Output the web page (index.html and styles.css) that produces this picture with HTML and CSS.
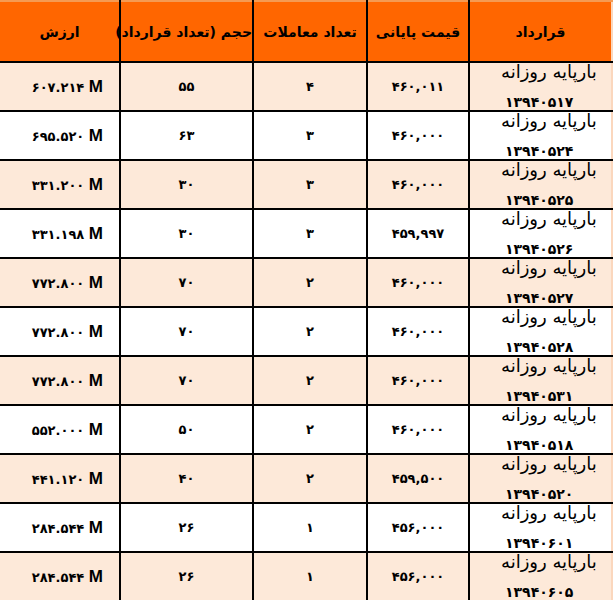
FILE: index.html
```html
<!DOCTYPE html>
<html lang="fa" dir="rtl">
<head>
<meta charset="utf-8">
<title>قراردادها</title>
<link rel="stylesheet" href="styles.css">
</head>
<body>
<table class="grid">
  <colgroup>
    <col class="c1"><col class="c2"><col class="c3"><col class="c4"><col class="c5">
  </colgroup>
  <thead>
    <tr>
      <th>قرارداد</th>
      <th>قیمت پایانی</th>
      <th>تعداد معاملات</th>
      <th>حجم (تعداد قرارداد)</th>
      <th>ارزش</th>
    </tr>
  </thead>
  <tbody>
    <tr class="odd"><td class="name"><div class="l1">بارپایه روزانه</div><div class="l2">۱۳۹۴۰۵۱۷</div></td><td class="num">۴۶۰,۰۱۱</td><td>۴</td><td>۵۵</td><td class="val">۶۰۷.۲۱۴ <b>M</b></td></tr>
    <tr><td class="name"><div class="l1">بارپایه روزانه</div><div class="l2">۱۳۹۴۰۵۲۴</div></td><td class="num">۴۶۰,۰۰۰</td><td>۳</td><td>۶۳</td><td class="val">۶۹۵.۵۲۰ <b>M</b></td></tr>
    <tr class="odd"><td class="name"><div class="l1">بارپایه روزانه</div><div class="l2">۱۳۹۴۰۵۲۵</div></td><td class="num">۴۶۰,۰۰۰</td><td>۳</td><td>۳۰</td><td class="val">۳۳۱.۲۰۰ <b>M</b></td></tr>
    <tr><td class="name"><div class="l1">بارپایه روزانه</div><div class="l2">۱۳۹۴۰۵۲۶</div></td><td class="num">۴۵۹,۹۹۷</td><td>۳</td><td>۳۰</td><td class="val">۳۳۱.۱۹۸ <b>M</b></td></tr>
    <tr class="odd"><td class="name"><div class="l1">بارپایه روزانه</div><div class="l2">۱۳۹۴۰۵۲۷</div></td><td class="num">۴۶۰,۰۰۰</td><td>۲</td><td>۷۰</td><td class="val">۷۷۲.۸۰۰ <b>M</b></td></tr>
    <tr><td class="name"><div class="l1">بارپایه روزانه</div><div class="l2">۱۳۹۴۰۵۲۸</div></td><td class="num">۴۶۰,۰۰۰</td><td>۲</td><td>۷۰</td><td class="val">۷۷۲.۸۰۰ <b>M</b></td></tr>
    <tr class="odd"><td class="name"><div class="l1">بارپایه روزانه</div><div class="l2">۱۳۹۴۰۵۳۱</div></td><td class="num">۴۶۰,۰۰۰</td><td>۲</td><td>۷۰</td><td class="val">۷۷۲.۸۰۰ <b>M</b></td></tr>
    <tr><td class="name"><div class="l1">بارپایه روزانه</div><div class="l2">۱۳۹۴۰۵۱۸</div></td><td class="num">۴۶۰,۰۰۰</td><td>۲</td><td>۵۰</td><td class="val">۵۵۲.۰۰۰ <b>M</b></td></tr>
    <tr class="odd"><td class="name"><div class="l1">بارپایه روزانه</div><div class="l2">۱۳۹۴۰۵۲۰</div></td><td class="num">۴۵۹,۵۰۰</td><td>۲</td><td>۴۰</td><td class="val">۴۴۱.۱۲۰ <b>M</b></td></tr>
    <tr><td class="name"><div class="l1">بارپایه روزانه</div><div class="l2">۱۳۹۴۰۶۰۱</div></td><td class="num">۴۵۶,۰۰۰</td><td>۱</td><td>۲۶</td><td class="val">۲۸۴.۵۴۴ <b>M</b></td></tr>
    <tr class="odd"><td class="name"><div class="l1">بارپایه روزانه</div><div class="l2">۱۳۹۴۰۶۰۵</div></td><td class="num">۴۵۶,۰۰۰</td><td>۱</td><td>۲۶</td><td class="val">۲۸۴.۵۴۴ <b>M</b></td></tr>
  </tbody>
</table>
</body>
</html>
```
FILE: styles.css
```css
html, body {
  margin: 0;
  padding: 0;
  background: #ffffff;
}
body {
  font-family: "DejaVu Sans", "Noto Sans", sans-serif;
  color: #000;
}
.grid {
  border-collapse: collapse;
  table-layout: fixed;
  width: 613px;
  direction: rtl;
}
.c1 { width: 143px; }
.c2 { width: 102px; }
.c3 { width: 114px; }
.c4 { width: 133px; }
.c5 { width: 121px; }

.grid th {
  background: #ff6600;
  height: 59px;
  padding: 0;
  font-size: 14px;
  font-weight: bold;
  text-align: center;
  vertical-align: middle;
  border: 2px solid #000;
  border-top: 2px solid #f59a52;
  white-space: nowrap;
}
.grid th:first-child { border-right: 2px solid #fbd7bd; }

.grid td {
  height: 47px;
  padding: 0;
  border: 2px solid #000;
  font-size: 13px;
  font-weight: bold;
  text-align: center;
  vertical-align: middle;
  overflow: visible;
}
.grid tr.odd td { background: #fde9d9; }
.grid td:first-child { border-right: 2px solid #fbd7bd; }

.grid td.num { letter-spacing: -0.6px; }

.grid td.name {
  vertical-align: top;
  text-align: left;
  padding-left: 31px;
  font-weight: normal;
}
.l1 {
  font-size: 18px;
  line-height: 20px;
  margin-top: -1px;
  white-space: nowrap;
}
.l2 {
  font-size: 14px;
  line-height: 14px;
  margin-top: 13px;
  padding-left: 4px;
  font-weight: bold;
  white-space: nowrap;
}
.grid td.val {
  direction: ltr;
  text-align: right;
  padding-right: 16px;
}
.val b {
  font-family: "Liberation Sans", Arial, sans-serif;
  font-size: 17px;
  font-weight: bold;
}
```
